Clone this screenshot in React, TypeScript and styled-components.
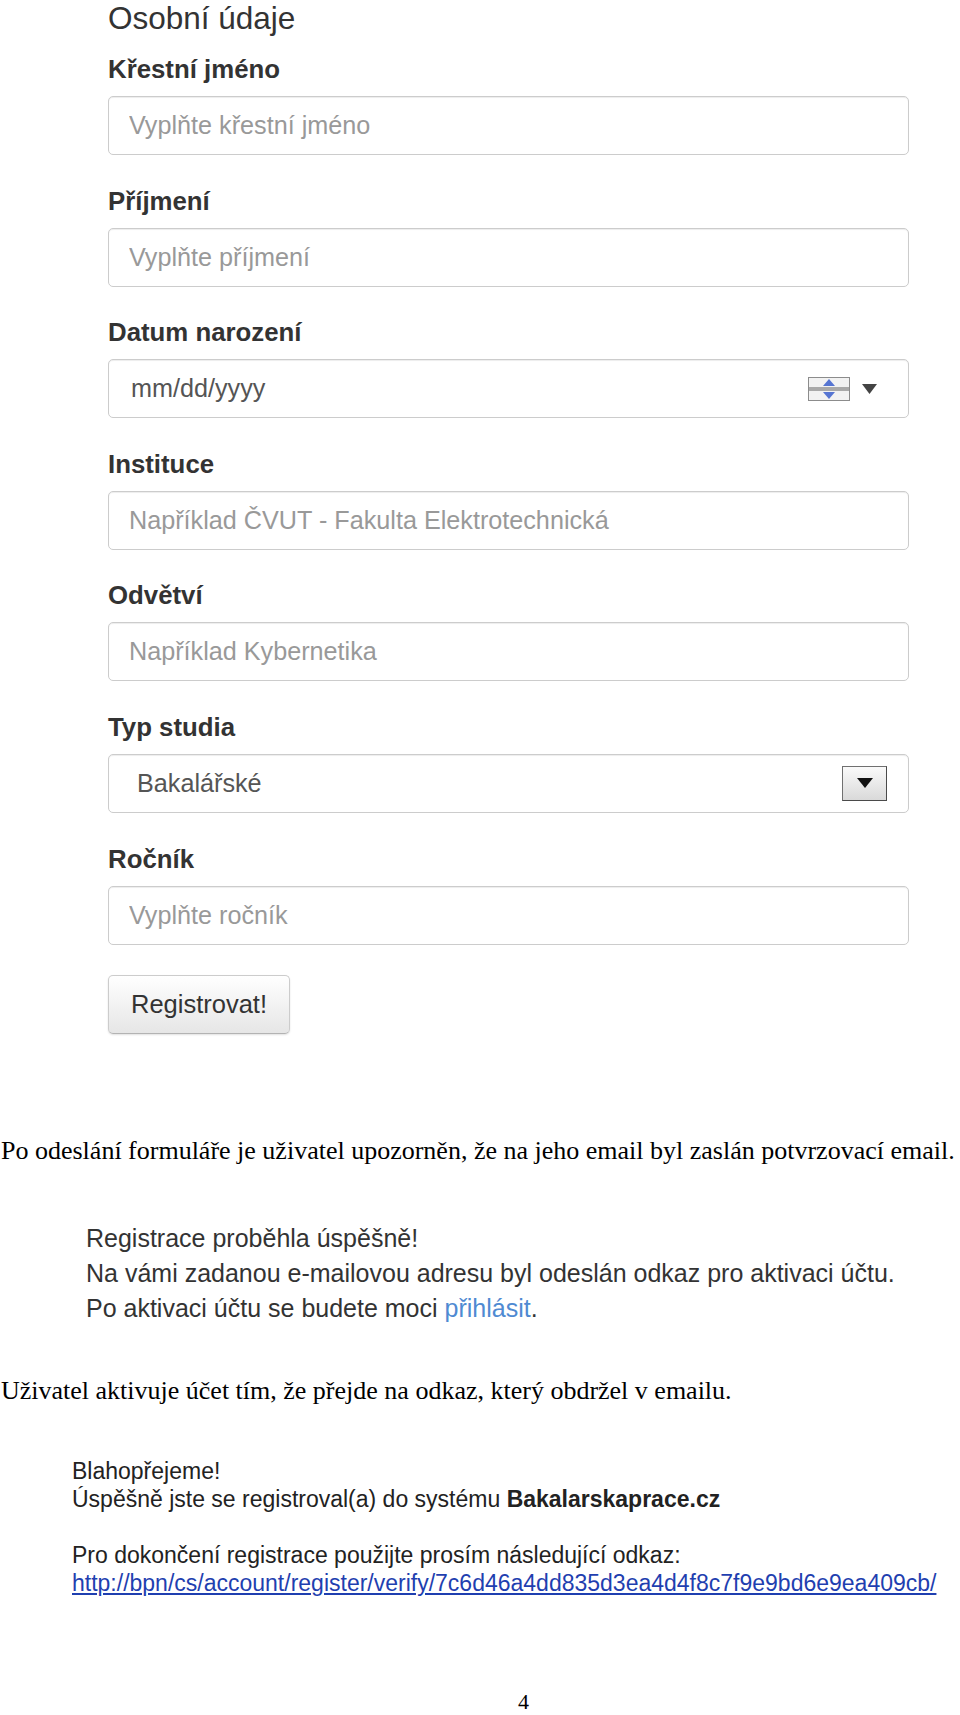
import * as React from "react";
import styled, { createGlobalStyle } from "styled-components";

const GlobalStyle = createGlobalStyle`
  html, body {
    margin: 0;
    padding: 0;
    background: #fff;
  }
  body {
    font-family: "Liberation Sans", Arial, sans-serif;
  }
`;

const Page = styled.div`
  width: 960px;
  min-height: 1715px;
  display: flex;
  flex-direction: column;
`;

const Form = styled.form`
  width: 801px;
  margin-left: 108px;
  display: flex;
  flex-direction: column;
`;

const Heading = styled.h2`
  margin: 0 0 18px;
  font-size: 31.5px;
  line-height: 36px;
  font-weight: normal;
  color: #333;
`;

const Field = styled.div`
  display: flex;
  flex-direction: column;
  margin-bottom: 30.6px;
`;

const Label = styled.label`
  font-size: 25.8px;
  line-height: 30px;
  font-weight: bold;
  color: #333;
  margin-bottom: 12px;
`;

const boxStyles = `
  box-sizing: border-box;
  width: 100%;
  height: 59px;
  border: 1px solid #ccc;
  border-radius: 5px;
  background: #fff;
  box-shadow: inset 0 1px 1px rgba(0, 0, 0, 0.075);
  font-family: "Liberation Sans", Arial, sans-serif;
  font-size: 25.2px;
`;

const TextInput = styled.input`
  ${boxStyles}
  padding: 0 20px;
  color: #555;
  outline: none;

  &::placeholder {
    color: #999;
  }
`;

const FakeBox = styled.div<{ $pad: number; $right: number }>`
  ${boxStyles}
  display: flex;
  align-items: center;
  padding: 0 ${(p) => p.$right}px 0 ${(p) => p.$pad}px;
  color: #555;
`;

const Value = styled.span`
  flex: 1;
`;

const DateControls = styled.div`
  display: flex;
  align-items: center;
  gap: 12px;
`;

const SelectButton = styled.div`
  box-sizing: border-box;
  width: 45px;
  height: 35px;
  border: 1px solid #707070;
  border-right-color: #4a4a4a;
  border-bottom-color: #4a4a4a;
  background: linear-gradient(#fafafa, #d9d9d9);
  display: flex;
  align-items: center;
  justify-content: center;
`;

const SubmitButton = styled.button`
  box-sizing: border-box;
  width: 182px;
  height: 59px;
  padding: 0;
  font-family: "Liberation Sans", Arial, sans-serif;
  font-size: 25.5px;
  color: #333;
  background: linear-gradient(#ffffff, #e6e6e6);
  border: 1px solid #ccc;
  border-bottom-color: #b3b3b3;
  border-radius: 5px;
  box-shadow: inset 0 1px 0 rgba(255, 255, 255, 0.2),
    0 1px 2px rgba(0, 0, 0, 0.12);
  text-align: center;
`;

const Paragraph = styled.p<{ $top: number }>`
  margin: ${(p) => p.$top}px 0 0;
  padding-left: 1px;
  font-family: "Liberation Serif", "Times New Roman", serif;
  font-size: 26px;
  line-height: 30px;
  color: #000;
  white-space: nowrap;
`;

const Notice = styled.div`
  margin: 55px 0 0 86px;
  font-size: 25px;
  line-height: 35px;
  color: #333;
`;

const NoticeLink = styled.a`
  color: #4f8ad2;
  text-decoration: none;
`;

const Email = styled.div`
  margin: 51px 0 0 72px;
  font-size: 23px;
  line-height: 28px;
  color: #222;
`;

const EmailPara = styled.p`
  margin: 0 0 28px;
`;

const EmailLink = styled.a`
  color: #1f3fb0;
  text-decoration: underline;
`;

const PageNumber = styled.div`
  margin-top: auto;
  padding-left: 518px;
  font-family: "Liberation Serif", "Times New Roman", serif;
  font-size: 22px;
  line-height: 26px;
  color: #000;
`;

const Spinner = () => (
  <svg width="42" height="24" viewBox="0 0 42 24">
    <rect x="0.5" y="0.5" width="41" height="23" fill="#f2f2f2" stroke="#8c8c8c" />
    <rect x="1" y="10" width="40" height="4" fill="#a9a9a9" />
    <polygon points="21,2 27,9 15,9" fill="#5675d2" />
    <polygon points="15,15 27,15 21,22" fill="#5675d2" />
  </svg>
);

const DownArrow = ({ w, h, color }: { w: number; h: number; color: string }) => (
  <svg width={w} height={h} viewBox={`0 0 ${w} ${h}`}>
    <polygon points={`0,0 ${w},0 ${w / 2},${h}`} fill={color} />
  </svg>
);

const fields = [
  { label: "Křestní jméno", placeholder: "Vyplňte křestní jméno" },
  { label: "Příjmení", placeholder: "Vyplňte příjmení" },
];

const fieldsAfter = [
  { label: "Instituce", placeholder: "Například ČVUT - Fakulta Elektrotechnická" },
  { label: "Odvětví", placeholder: "Například Kybernetika" },
];

export default function App() {
  return (
    <Page>
      <GlobalStyle />
      <Form onSubmit={(e) => e.preventDefault()}>
        <Heading>Osobní údaje</Heading>
        {fields.map((f) => (
          <Field key={f.label}>
            <Label>{f.label}</Label>
            <TextInput placeholder={f.placeholder} />
          </Field>
        ))}
        <Field>
          <Label>Datum narození</Label>
          <FakeBox $pad={22} $right={31}>
            <Value>mm/dd/yyyy</Value>
            <DateControls>
              <Spinner />
              <DownArrow w={15} h={10} color="#444" />
            </DateControls>
          </FakeBox>
        </Field>
        {fieldsAfter.map((f) => (
          <Field key={f.label}>
            <Label>{f.label}</Label>
            <TextInput placeholder={f.placeholder} />
          </Field>
        ))}
        <Field>
          <Label>Typ studia</Label>
          <FakeBox $pad={28} $right={21}>
            <Value>Bakalářské</Value>
            <SelectButton>
              <DownArrow w={16} h={10} color="#111" />
            </SelectButton>
          </FakeBox>
        </Field>
        <Field>
          <Label>Ročník</Label>
          <TextInput placeholder="Vyplňte ročník" />
        </Field>
        <SubmitButton type="submit">Registrovat!</SubmitButton>
      </Form>

      <Paragraph $top={102}>
        Po odeslání formuláře je uživatel upozorněn, že na jeho email byl zaslán potvrzovací email.
      </Paragraph>

      <Notice>
        Registrace proběhla úspěšně!
        <br />
        Na vámi zadanou e-mailovou adresu byl odeslán odkaz pro aktivaci účtu.
        <br />
        Po aktivaci účtu se budete moci <NoticeLink href="#">přihlásit</NoticeLink>.
      </Notice>

      <Paragraph $top={50}>
        Uživatel aktivuje účet tím, že přejde na odkaz, který obdržel v emailu.
      </Paragraph>

      <Email>
        <EmailPara>
          Blahopřejeme!
          <br />
          Úspěšně jste se registroval(a) do systému <b>Bakalarskaprace.cz</b>
        </EmailPara>
        <EmailPara>
          Pro dokončení registrace použijte prosím následující odkaz:
          <br />
          <EmailLink href="#">
            http://bpn/cs/account/register/verify/7c6d46a4dd835d3ea4d4f8c7f9e9bd6e9ea409cb/
          </EmailLink>
        </EmailPara>
      </Email>

      <PageNumber>4</PageNumber>
    </Page>
  );
}
